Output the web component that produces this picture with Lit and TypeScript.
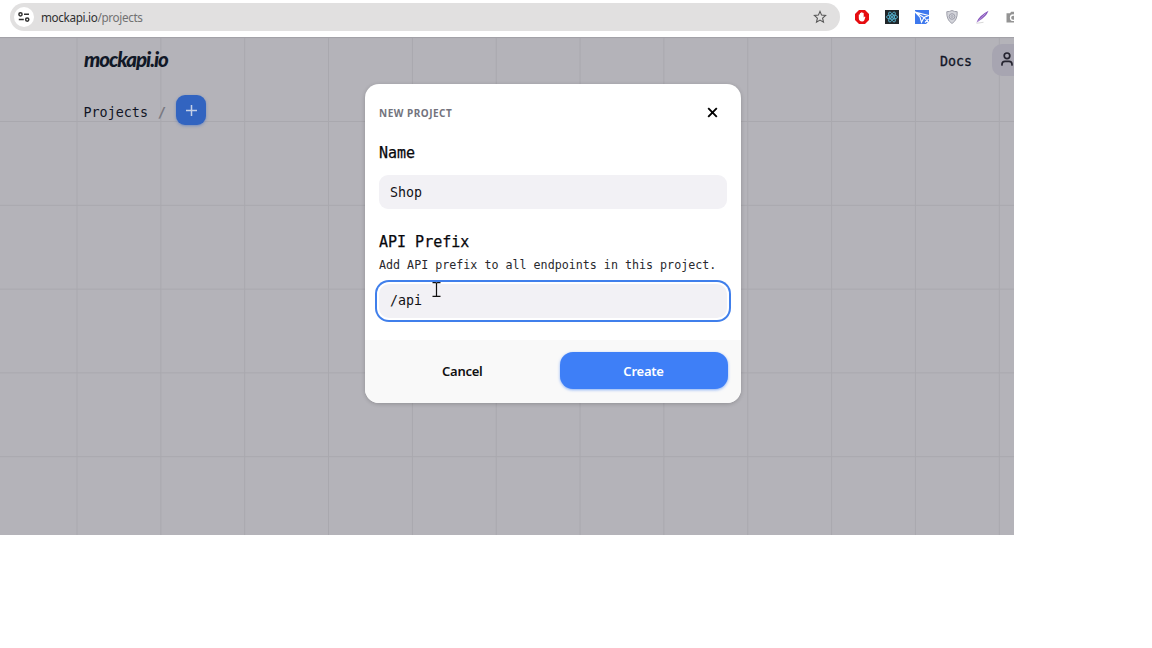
import { LitElement, html, css } from "lit";
import { customElement, property, state } from "lit/decorators.js";

@customElement("browser-bar")
class BrowserBar extends LitElement {
  @property() host = "";
  @property() path = "";

  static styles = css`
    :host { display: flex; align-items: center; height: 37px; background: #fff; overflow: hidden; padding: 0 0 3px 10px; box-sizing: border-box; }
    .address { display: flex; align-items: center; flex: none; width: 830px; height: 28px; border-radius: 14px; background: #e1e0e0; box-sizing: border-box; padding: 0 13px 0 4px; margin-right: 14.5px; }
    .site { width: 20px; height: 20px; border-radius: 50%; background: #fff; flex: none; margin-right: 7px; }
    .url { flex: 1; font: 11.7px/18px "Noto Sans", sans-serif; color: #303030; letter-spacing: -0.34px; }
    .path { color: #727272; }
    .extensions { display: flex; gap: 16.2px; flex: none; }
    svg { display: block; flex: none; }
  `;

  render() {
    return html`
      <div class="address">
        <svg class="site" viewBox="0 0 20 20" fill="none" stroke="#303030" stroke-width="1.5">
          <circle cx="6.5" cy="7.3" r="1.6"/><path d="M10 7.3h5M4.8 12.6h5"/><circle cx="13.2" cy="12.6" r="1.6"/>
        </svg>
        <span class="url">${this.host}<span class="path">${this.path}</span></span>
        <svg width="14" height="14" viewBox="0 0 14 14" fill="none" stroke="#555" stroke-width="1.1">
          <path d="M7 1.4l1.6 3.7 4 .4-3 2.7.9 4L7 10.1l-3.5 2.1.9-4-3-2.7 4-.4z"/>
        </svg>
      </div>
      <div class="extensions">
        <svg width="14" height="14" viewBox="0 0 14 14">
          <path fill="#e60c10" d="M4 0h6l4 4v6l-4 4H4l-4-4V4z"/>
          <path fill="#fff" d="M3.8 8V4.700q.5-.7 1.100 0V3.200q.6-.7 1.200 0v-.7q.7-.7 1.400 0v.7q.6-.7 1.200 0v4.300l1-1q.8 0 .6.800L9.300 10.300q-.6 1.300-2.200 1.300Q3.800 11.400 3.800 8z"/>
        </svg>
        <svg width="14" height="14" viewBox="0 0 14 14" fill="none" stroke="#57b9d8" stroke-width=".85">
          <rect width="14" height="14" fill="#20262a" stroke="none"/>
          <ellipse cx="7" cy="7" rx="5.6" ry="2.1"/>
          <ellipse cx="7" cy="7" rx="5.6" ry="2.1" transform="rotate(60 7 7)"/>
          <ellipse cx="7" cy="7" rx="5.6" ry="2.1" transform="rotate(120 7 7)"/>
          <circle cx="7" cy="7" r=".8" fill="#57b9d8"/>
        </svg>
        <svg width="14" height="14" viewBox="0 0 14 14">
          <path fill="#3d78ed" d="M0 0h14v11l-3 3H0z"/>
          <path fill="none" stroke="#fff" stroke-width="1.1" d="M0 2l13.500 3.500-4.500 2L6.500 12.200 5 7zM1 2.400l7.800 5.100M9 7.500l5 5.500M10 12.500l3.500-3.500"/>
        </svg>
        <svg width="14" height="14" viewBox="0 0 14 14" fill="none">
          <path d="M7 .5q2.500 1.300 5.200 1.200.5 8.200-5.200 11.800Q1.300 9.900 1.800 1.700 4.500 1.800 7 .5z" fill="#d4d5db" stroke="#a0a1ac"/>
          <circle cx="7" cy="6.500" r="2.800" stroke="#9899a6" stroke-width=".9"/>
          <circle cx="7" cy="6.500" r="1" stroke="#9899a6" stroke-width=".7"/>
        </svg>
        <svg width="14" height="14" viewBox="0 0 14 14">
          <path fill="#8655bd" d="M1.500 12.500Q3.500 6 13.500.8 11.500 6.500 3.900 11z"/>
          <path stroke="#cdb4e4" stroke-width=".7" d="M2 12.500L10.500 3.500"/>
          <path stroke="#c9c9c9" stroke-width=".7" d="M1.500 13.300l7-1"/>
        </svg>
        <svg width="14" height="14" viewBox="0 0 14 14" fill="none">
          <path fill="#949494" d="M1.500 3.200H5L6.200 1.700h4l1.200 1.500H14v9.300H1.500z"/>
          <circle cx="8.200" cy="7.700" r="2.700" stroke="#fff" stroke-width="1.300"/>
        </svg>
      </div>
    `;
  }
}

@customElement("project-dialog")
class ProjectDialog extends LitElement {
  @state() private name = "Shop";
  @state() private prefix = "/api";

  static styles = css`
    :host { display: flex; flex-direction: column; width: 376px; height: 319px; border-radius: 14px; overflow: hidden; background: #fff; box-shadow: 0 1px 4px #0003; color: #08080c; font-family: "DejaVu Sans Mono", monospace; }
    .body { flex: 1; padding: 18px 14px 0; box-sizing: border-box; }
    .header { display: flex; align-items: center; justify-content: space-between; height: 21px; padding-right: 9px; }
    .title { font: 700 10px/16px "Noto Sans", sans-serif; letter-spacing: .5px; color: #73737d; }
    .label { display: block; font-size: 15px; line-height: 20px; -webkit-text-stroke: .25px #08080c; margin-top: 20px; }
    .hint { font-size: 11.68px; line-height: 16px; margin: 5px 0 8px; white-space: nowrap; color: #29292e; }
    .field { display: block; width: 348px; height: 34px; border: 0; outline: 0; border-radius: 9px; background: #f2f1f5; box-sizing: border-box; padding: 0 11px; font: 13.3px/34px "DejaVu Sans Mono", monospace; color: #101014; }
    .name { margin-top: 12px; padding-top: 1px; line-height: 33px; }
    .second { margin-top: 23px; }
    .active { box-shadow: 0 0 0 2px #fff, 0 0 0 4px #407feb; border-radius: 10px; margin-top: 11px; }
    .footer { display: grid; grid-template-columns: 1fr 168px; gap: 13px; height: 63px; box-sizing: border-box; padding: 12px 13.5px 14px 13px; background: #f9f9f9; }
    .button { border: 0; border-radius: 13px; font: 600 13px/37px "Noto Sans", sans-serif; letter-spacing: -.25px; padding: 1px 0 0; background: none; color: #111; }
    .primary { background: #3e7ff7; color: #fff; box-shadow: 0 1px 3px #3e7ff799; height: 37px; line-height: 36px; }
  `;

  render() {
    return html`
      <div class="body">
        <div class="header">
          <span class="title">NEW PROJECT</span>
          <svg width="11" height="11" viewBox="0 0 11 11"><path d="M1.200 1.200l8.600 8.600m0-8.600L1.200 9.800" stroke="#000" stroke-width="1.900"/></svg>
        </div>
        <label class="label">Name</label>
        <input class="field name" .value=${this.name} />
        <label class="label second">API Prefix</label>
        <div class="hint">Add API prefix to all endpoints in this project.</div>
        <input class="field active" .value=${this.prefix} />
      </div>
      <div class="footer">
        <button class="button">Cancel</button>
        <button class="button primary">Create</button>
      </div>
    `;
  }
}

@customElement("app-root")
class AppRoot extends LitElement {
  static styles = css`
    :host { display: block; width: 1152px; height: 648px; background: #fff; overflow: hidden; }
    .window { width: 1014px; height: 535px; position: relative; overflow: hidden; display: flex; flex-direction: column; }
    .page { flex: 1; box-sizing: border-box; border-top: 1px solid #a3a2a8; color: #101425; font-family: "DejaVu Sans Mono", monospace;
      background: linear-gradient(90deg, #a9a8ae 1px, transparent 1px) 76.500px 0 / 83.850px 83.850px, linear-gradient(#a9a8ae 1px, transparent 1px) 0 -.800px / 83.800px 83.800px, #b4b3b9; }
    .top { display: flex; align-items: center; height: 46px; padding-left: 84px; }
    .logo { font: italic 900 20.500px/28px Lato, sans-serif; width: 84px; flex: none; white-space: nowrap; letter-spacing: -1.050px; color: #111827; margin-top: -5px; }
    .docs { margin-left: auto; font-size: 13.300px; line-height: 20px; -webkit-text-stroke: .300px #151a2a; margin-top: 2px; }
    .account { width: 22px; height: 32px; margin: -3px 0 0 20px; background: #a7a5b1; border-radius: 10px 0 0 10px; flex: none; }
    .account svg { display: block; margin: 8px 0 0 8px; }
    .crumbs { display: flex; align-items: center; height: 31px; margin-top: 11px; padding-left: 83.500px; font-size: 13.400px; line-height: 20px; }
    .crumb { padding-top: 5px; }
    .slash { color: #74747d; margin: 0 10px; -webkit-text-stroke: .250px #74747d; }
    .add { display: grid; place-items: center; width: 30px; height: 30px; margin-top: -1px; border-radius: 9px; background: #3264c0; box-shadow: 0 1px 3px #3466c480; }
    .dialog { position: absolute; left: 365px; top: 84px; }
    .cursor { position: absolute; left: 431px; top: 281px; }
  `;

  render() {
    return html`
      <div class="window">
        <browser-bar host="mockapi.io" path="/projects"></browser-bar>
        <div class="page">
          <div class="top">
            <span class="logo">mockapi.io</span>
            <span class="docs">Docs</span>
            <div class="account">
              <svg width="14" height="15" viewBox="0 0 14 15" fill="none" stroke="#252430" stroke-width="1.700" stroke-linecap="round"><circle cx="7" cy="3.800" r="2.800"/><path d="M2 13v-.700q0-3 3-3h4q3 0 3 3v.700"/></svg>
            </div>
          </div>
          <div class="crumbs">
            <span class="crumb">Projects</span><span class="crumb slash">/</span>
            <span class="add"><svg width="11" height="11" viewBox="0 0 11 11" stroke="#c5d0e6" stroke-width="1.500"><path d="M0 5.500h11M5.500 0v11"/></svg></span>
          </div>
        </div>
        <project-dialog class="dialog"></project-dialog>
        <svg class="cursor" width="11" height="17" viewBox="0 0 11 17" fill="none" stroke="#111" stroke-width="1.200"><path d="M1.500 1.600h3q1 0 1 1v11.800q0 1-1 1h-3M9.500 1.600h-3q-1 0-1 1M9.500 15.400h-3q-1 0-1-1"/></svg>
      </div>
    `;
  }
}
